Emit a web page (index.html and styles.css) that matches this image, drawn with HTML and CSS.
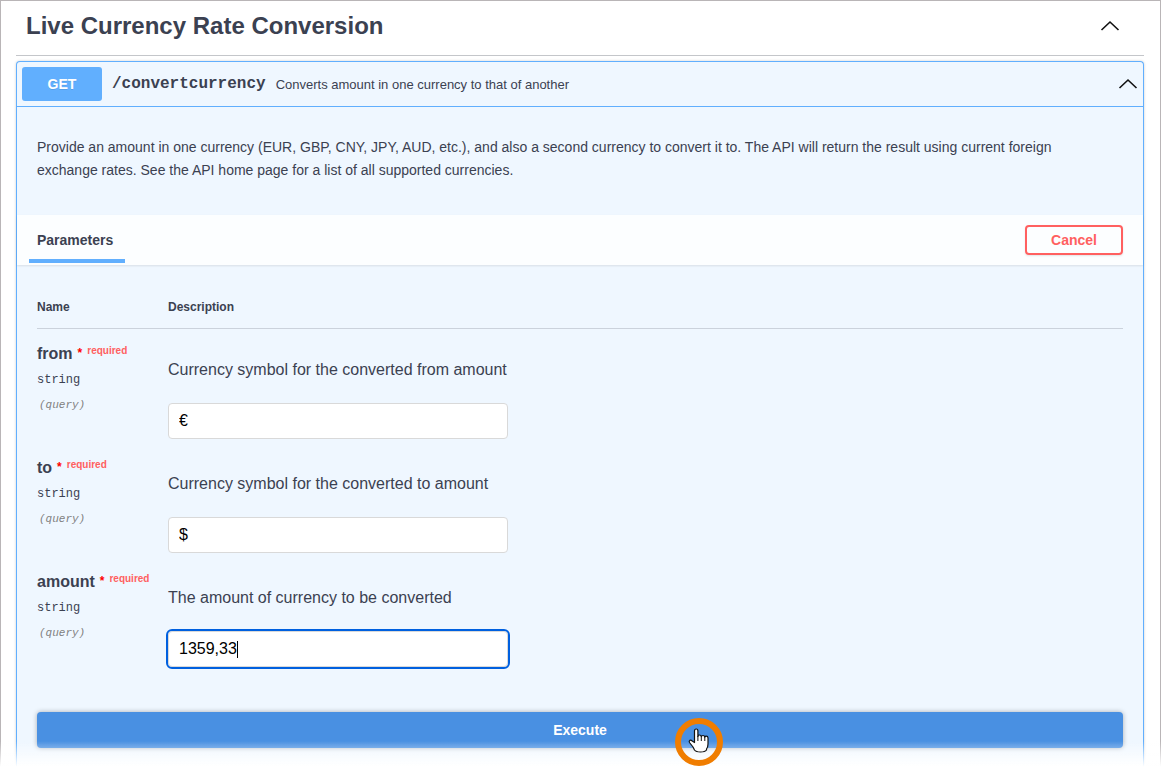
FILE: index.html
```html
<!DOCTYPE html>
<html lang="en">

<head>
    <meta charset="UTF-8">
    <meta name="viewport" content="width=device-width, initial-scale=1.0">
    <title>Live Currency Rate Conversion</title>
    <link rel="stylesheet" href="styles.css">
</head>

<body>
    <main class="page">
        <header class="tag-header">
            <h1>Live Currency Rate Conversion</h1>
            <button class="toggle" type="button" aria-label="Collapse section">
                <svg width="20" height="12" viewBox="0 0 20 12"><path d="M1.500 10 10 2l8.500 8"/></svg>
            </button>
        </header>

        <section class="opblock">
            <div class="summary">
                <button class="method" type="button">GET</button>
                <a class="path" href="#convertcurrency">/convertcurrency</a>
                <span class="summary-text">Converts amount in one currency to that of another</span>
                <button class="toggle" type="button" aria-label="Collapse operation">
                    <svg width="20" height="12" viewBox="0 0 20 12"><path d="M1.500 10 10 2l8.500 8"/></svg>
                </button>
            </div>

            <p class="description">Provide an amount in one currency (EUR, GBP, CNY, JPY, AUD, etc.), and also a second currency to convert it to. The API will return the result using current foreign exchange rates. See the API home page for a list of all supported currencies.</p>

            <div class="section-header">
                <h2 class="tab">Parameters</h2>
                <button class="cancel" type="button">Cancel</button>
            </div>

            <form class="parameters">
                <table>
                    <thead>
                        <tr>
                            <th class="col-name">Name</th>
                            <th>Description</th>
                        </tr>
                    </thead>
                    <tbody>
                        <tr>
                            <td>
                                <label class="name" for="from">from<span class="star">*</span><span class="required">required</span></label>
                                <div class="type">string</div>
                                <div class="in">(query)</div>
                            </td>
                            <td>
                                <p>Currency symbol for the converted from amount</p>
                                <input type="text" id="from" value="€">
                            </td>
                        </tr>
                        <tr>
                            <td>
                                <label class="name" for="to">to<span class="star">*</span><span class="required">required</span></label>
                                <div class="type">string</div>
                                <div class="in">(query)</div>
                            </td>
                            <td>
                                <p>Currency symbol for the converted to amount</p>
                                <input type="text" id="to" value="$">
                            </td>
                        </tr>
                        <tr>
                            <td>
                                <label class="name" for="amount">amount<span class="star">*</span><span class="required">required</span></label>
                                <div class="type">string</div>
                                <div class="in">(query)</div>
                            </td>
                            <td>
                                <p>The amount of currency to be converted</p>
                                <div class="field">
                                    <input type="text" id="amount" value="1359,33" autofocus>
                                    <span class="caret"></span>
                                </div>
                            </td>
                        </tr>
                    </tbody>
                </table>

                <div class="execute-wrapper">
                    <button class="execute" type="button">Execute</button>
                    <svg class="pointer" width="48" height="48" viewBox="0 0 48 48" aria-hidden="true">
                        <circle cx="24" cy="24" r="21" fill="none" stroke="#f07d00" stroke-width="6"/>
                        <path d="M19.500 24.500V13q0-2 1.700-2t1.700 2v5.500q0-1.500 1.600-1.500t1.800 1.700q.2-1.200 1.700-1.200t1.800 1.700q.2-1 1.600-1t1.600 1.700V26q0 3-1.500 5v1q-1.500 2-6 2t-6-2l-1.500-3-3.500-4.500q-.8-1.300.3-2.100 1.300-.6 2.400.6z" fill="#fff" stroke="#111" stroke-width="1.200" stroke-linejoin="round"/>
                        <path d="M22.900 18v5M26.300 18.500V23M29.800 19v4" fill="none" stroke="#111"/>
                    </svg>
                </div>
            </form>
        </section>
    </main>
</body>

</html>
```

FILE: styles.css
```css
* {
    box-sizing: border-box;
}

body {
    margin: 0;
    background: #fff;
    color: #3b4151;
    font-family: "Liberation Sans", Arial, sans-serif;
    overflow: hidden;
}

h1,
h2,
p {
    margin: 0;
}

button,
input {
    font-family: inherit;
}

.page {
    display: flex;
    flex-direction: column;
    min-height: 100vh;
    padding: 0 16px 0 15px;
    border: 1px solid #b9b5b7;
    border-bottom: 0;
}

/* fades the page out at the bottom edge */
.page::after {
    content: "";
    position: fixed;
    left: 0;
    right: 0;
    bottom: 0;
    height: 28px;
    background: linear-gradient(rgba(255, 255, 255, 0), #fff 92%);
    pointer-events: none;
}

.tag-header {
    display: flex;
    align-items: center;
    justify-content: space-between;
    height: 55px;
    padding: 0 24px 5px 10px;
    margin-bottom: 5px;
    border-bottom: 1px solid #c4c6ca;
}

.tag-header h1 {
    font-size: 24px;
    line-height: 28px;
}

.toggle {
    display: flex;
    padding: 0;
    border: 0;
    background: none;
}

.toggle path {
    fill: none;
    stroke: #111;
    stroke-width: 1.6;
}

.opblock {
    flex: 1;
    border: 1px solid #61affe;
    border-bottom: 0;
    border-radius: 4px 4px 0 0;
    background: #eff7ff;
    box-shadow: 0 0 3px rgba(0, 0, 0, 0.19);
}

.summary {
    display: flex;
    align-items: center;
    padding: 5px;
    border-bottom: 1px solid #61affe;
}

.method {
    width: 80px;
    height: 34px;
    border: 0;
    border-radius: 3px;
    background: #61affe;
    color: #fff;
    font-size: 14px;
    font-weight: bold;
    text-shadow: 0 1px 0 rgba(0, 0, 0, 0.1);
}

.path {
    padding: 0 10px;
    color: #3b4151;
    font-family: "Liberation Mono", "Courier New", monospace;
    font-size: 16px;
    font-weight: bold;
    text-decoration: none;
}

.summary-text {
    flex: 1;
    font-size: 13px;
}

.description {
    padding: 29px 40px 33px 20px;
    font-size: 14px;
    line-height: 23px;
}

.section-header {
    display: flex;
    align-items: center;
    justify-content: space-between;
    height: 50px;
    padding: 0 20px 0 12px;
    background: rgba(255, 255, 255, 0.8);
    box-shadow: 0 1px 2px rgba(0, 0, 0, 0.1);
}

.tab {
    align-self: flex-start;
    min-width: 96px;
    height: 48px;
    padding: 0 8px;
    border-bottom: 4px solid #61affe;
    font-size: 14px;
    line-height: 50px;
}

.cancel {
    width: 98px;
    height: 30px;
    border: 2px solid #ff6060;
    border-radius: 4px;
    background: transparent;
    box-shadow: 0 1px 2px rgba(0, 0, 0, 0.1);
    color: #ff6060;
    font-size: 14px;
    font-weight: bold;
}

.parameters {
    padding: 20px;
}

table {
    width: 100%;
    border-spacing: 0;
}

th {
    height: 44px;
    padding: 0;
    border-bottom: 1px solid #cbd2dc;
    font-size: 12px;
    text-align: left;
}

.col-name {
    width: 131px;
}

td {
    height: 114px;
    padding: 14px 0 0;
    vertical-align: top;
}

.name {
    display: block;
    font-size: 16px;
    font-weight: bold;
    line-height: 22px;
}

.star,
.required {
    padding-left: 5px;
    font-size: 10px;
    line-height: 10px;
    vertical-align: 5px;
}

.star {
    color: #f00;
    font-size: 12px;
    vertical-align: 2px;
}

.required {
    color: #ff6060;
}

.type,
.in {
    font-family: "Liberation Mono", "Courier New", monospace;
    font-size: 12px;
    line-height: 14px;
}

.type {
    padding: 8px 0 11px;
}

.in {
    padding-left: 2px;
    color: #808080;
    font-size: 11px;
    font-style: italic;
}

td p {
    padding: 17px 0 23px;
    font-size: 16px;
    line-height: 20px;
}

td input {
    display: block;
    width: 340px;
    height: 36px;
    padding: 0 10px;
    border: 1px solid #d9d9d9;
    border-radius: 4px;
    background: #fff;
    color: #000;
    font-size: 16px;
}

td input:focus {
    outline: 2px solid #0060df;
    caret-color: transparent;
}

.field {
    position: relative;
}

/* steady caret after the typed amount */
.caret {
    display: none;
    position: absolute;
    top: 10px;
    left: 69px;
    width: 1px;
    height: 17px;
    background: #000;
}

input:focus + .caret {
    display: block;
}

.execute-wrapper {
    position: relative;
    padding-top: 41px;
}

.execute {
    display: block;
    width: 100%;
    height: 36px;
    border: 0;
    border-radius: 4px;
    background: #4990e2;
    box-shadow: 0 0 5px rgba(0, 0, 0, 0.3);
    color: #fff;
    font-size: 14px;
    font-weight: bold;
}

/* click marker over the button */
.pointer {
    position: absolute;
    right: 400px;
    bottom: -18px;
    z-index: 1;
}
```
